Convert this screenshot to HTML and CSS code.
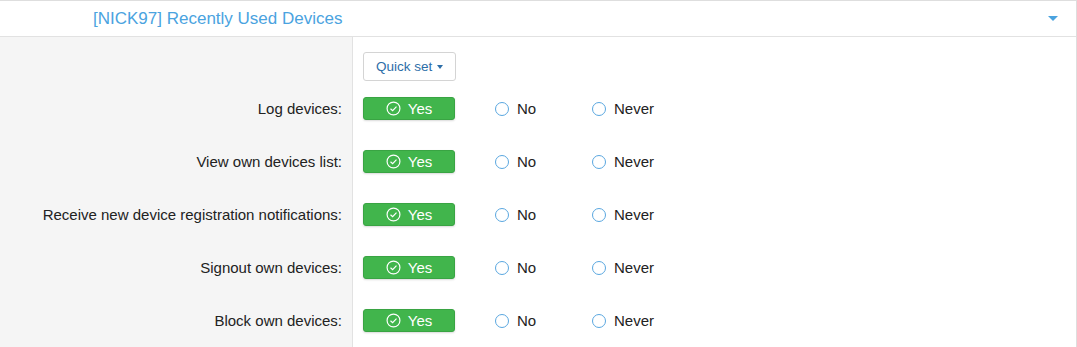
FILE: index.html
```html
<!DOCTYPE html>
<html lang="en">
<head>
    <meta charset="UTF-8">
    <title>Recently Used Devices</title>
    <link rel="stylesheet" href="styles.css">
</head>
<body>
    <div class="panel">
        <div class="panel-header">
            <span class="panel-title">[NICK97] Recently Used Devices</span>
            <span class="caret-down"></span>
        </div>

        <div class="perm-row quick-row">
            <div class="perm-label"></div>
            <div class="perm-controls">
                <button class="quick-set">Quick set <span class="caret-small"></span></button>
            </div>
        </div>

        <div class="perm-row">
            <div class="perm-label">Log devices:</div>
            <div class="perm-controls">
                <span class="btn-yes"><svg class="check" viewBox="0 0 14 14"><circle cx="7" cy="7" r="6" /><path d="M4.2 7.2 L6.2 9.1 L9.8 5.2" /></svg>Yes</span>
                <label class="radio"><span class="circle"></span>No</label>
                <label class="radio"><span class="circle"></span>Never</label>
            </div>
        </div>

        <div class="perm-row">
            <div class="perm-label">View own devices list:</div>
            <div class="perm-controls">
                <span class="btn-yes"><svg class="check" viewBox="0 0 14 14"><circle cx="7" cy="7" r="6" /><path d="M4.2 7.2 L6.2 9.1 L9.8 5.2" /></svg>Yes</span>
                <label class="radio"><span class="circle"></span>No</label>
                <label class="radio"><span class="circle"></span>Never</label>
            </div>
        </div>

        <div class="perm-row">
            <div class="perm-label">Receive new device registration notifications:</div>
            <div class="perm-controls">
                <span class="btn-yes"><svg class="check" viewBox="0 0 14 14"><circle cx="7" cy="7" r="6" /><path d="M4.2 7.2 L6.2 9.1 L9.8 5.2" /></svg>Yes</span>
                <label class="radio"><span class="circle"></span>No</label>
                <label class="radio"><span class="circle"></span>Never</label>
            </div>
        </div>

        <div class="perm-row">
            <div class="perm-label">Signout own devices:</div>
            <div class="perm-controls">
                <span class="btn-yes"><svg class="check" viewBox="0 0 14 14"><circle cx="7" cy="7" r="6" /><path d="M4.2 7.2 L6.2 9.1 L9.8 5.2" /></svg>Yes</span>
                <label class="radio"><span class="circle"></span>No</label>
                <label class="radio"><span class="circle"></span>Never</label>
            </div>
        </div>

        <div class="perm-row">
            <div class="perm-label">Block own devices:</div>
            <div class="perm-controls">
                <span class="btn-yes"><svg class="check" viewBox="0 0 14 14"><circle cx="7" cy="7" r="6" /><path d="M4.2 7.2 L6.2 9.1 L9.8 5.2" /></svg>Yes</span>
                <label class="radio"><span class="circle"></span>No</label>
                <label class="radio"><span class="circle"></span>Never</label>
            </div>
        </div>

        <div class="perm-row">
            <div class="perm-label"></div>
            <div class="perm-controls"></div>
        </div>
    </div>
</body>
</html>
```

FILE: styles.css
```css
body {
    margin: 0;
    font-family: "Liberation Sans", Arial, sans-serif;
    color: #222;
    background-color: #fff;
}

.panel {
    border-top: 1px solid #dedede;
    border-right: 1px solid #dedede;
}

.panel-header {
    display: flex;
    align-items: center;
    justify-content: space-between;
    height: 35px;
    padding: 0 18px 0 93px;
    border-bottom: 1px solid #e2e2e2;
}

.panel-title {
    font-size: 17px;
    color: #4aa3df;
}

.caret-down {
    width: 0;
    height: 0;
    border-left: 5px solid transparent;
    border-right: 5px solid transparent;
    border-top: 5px solid #4aa3df;
}

.perm-row {
    display: flex;
    height: 53px;
}

.quick-row {
    height: 45px;
}

.perm-label {
    width: 342px;
    flex-shrink: 0;
    padding-right: 10px;
    background-color: #f5f5f5;
    border-right: 1px solid #e2e2e2;
    display: flex;
    align-items: center;
    justify-content: flex-end;
    font-size: 15px;
    color: #222;
}

.perm-controls {
    display: flex;
    align-items: center;
    padding-left: 10px;
}

.quick-row .perm-controls {
    align-items: flex-start;
    padding-top: 15px;
}

.quick-set {
    height: 29px;
    width: 93px;
    padding: 0;
    font-family: inherit;
    font-size: 13.5px;
    color: #2d6ea8;
    background-color: #fff;
    border: 1px solid #d4d4d4;
    border-radius: 3px;
}

.caret-small {
    display: inline-block;
    vertical-align: middle;
    width: 0;
    height: 0;
    margin-left: 1px;
    border-left: 3.5px solid transparent;
    border-right: 3.5px solid transparent;
    border-top: 4px solid #2d6ea8;
}

.btn-yes {
    display: flex;
    align-items: center;
    justify-content: center;
    box-sizing: border-box;
    width: 92px;
    height: 23px;
    font-size: 15px;
    color: #fff;
    background-color: #41b54c;
    border: 1px solid #39a443;
    border-radius: 3px;
    box-shadow: 0 1px 2px rgba(0, 0, 0, 0.15);
    margin-right: 40px;
}

.check {
    width: 15px;
    height: 15px;
    margin-right: 7px;
    fill: none;
    stroke: #fff;
    stroke-width: 1.1;
}

.radio {
    display: flex;
    align-items: center;
    width: 97px;
    font-size: 15px;
    color: #222;
}

.circle {
    box-sizing: border-box;
    width: 14px;
    height: 14px;
    margin-right: 8px;
    border: 1.5px solid #5aa7e0;
    border-radius: 50%;
}
```
